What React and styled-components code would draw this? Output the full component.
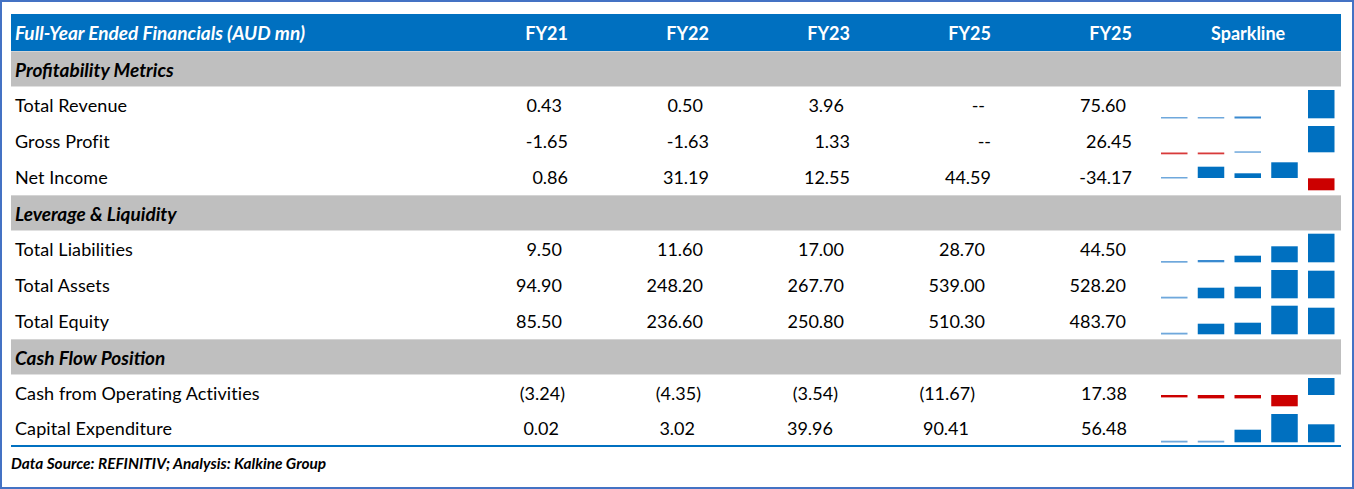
import React from "react"
import styled, { createGlobalStyle } from "styled-components"

// -- GLOBAL --
const GlobalStyle = createGlobalStyle`
    html, body {
        margin: 0;
        padding: 0;
        background: #ffffff;
    }
    body {
        font-family: Lato, "Open Sans", sans-serif;
        color: #000000;
    }
`

// -- DATA --
const YEARS = ["FY21", "FY22", "FY23", "FY25", "FY25"]

const LIGHT = "#6fa8dc"
const MID = "#3a8ad0"
const BLUE = "#0070c0"
const RED = "#cc0000"
const LIGHTRED = "#d83a3a"

// bars: [top, height, colour] relative to the 36px row
const SECTIONS = [
    {
        title: "Profitability Metrics",
        rows: [
            {
                label: "Total Revenue", pad: 6,
                values: ["0.43", "0.50", "3.96", "--", "75.60"],
                bars: [[30, 1.5, LIGHT], [30, 1.5, LIGHT], [29.5, 2, MID], null, [3, 28.3, BLUE]],
            },
            {
                label: "Gross Profit", pad: 0,
                values: ["-1.65", "-1.63", "1.33", "--", "26.45"],
                bars: [[29.5, 1.8, LIGHTRED], [29.5, 1.8, LIGHTRED], [28.3, 1.5, LIGHT], null, [3, 26.3, BLUE]],
            },
            {
                label: "Net Income", pad: 0,
                values: ["0.86", "31.19", "12.55", "44.59", "-34.17"],
                bars: [[18, 1.5, LIGHT], [7.7, 11.3, BLUE], [14.3, 4.7, BLUE], [3.3, 15.7, BLUE], [19.3, 12, RED]],
            },
        ],
    },
    {
        title: "Leverage & Liquidity",
        rows: [
            {
                label: "Total Liabilities", pad: 6,
                values: ["9.50", "11.60", "17.00", "28.70", "44.50"],
                bars: [[30, 1.7, LIGHT], [29, 2.3, MID], [24.7, 6.6, BLUE], [15.3, 16, BLUE], [2.7, 28.6, BLUE]],
            },
            {
                label: "Total Assets", pad: 6,
                values: ["94.90", "248.20", "267.70", "539.00", "528.20"],
                bars: [[29.7, 1.8, LIGHT], [20.7, 10.6, BLUE], [19.7, 11.6, BLUE], [3, 28.3, BLUE], [3.7, 27.6, BLUE]],
            },
            {
                label: "Total Equity", pad: 6,
                values: ["85.50", "236.60", "250.80", "510.30", "483.70"],
                bars: [[29.7, 1.8, LIGHT], [20.7, 10.6, BLUE], [19.7, 11.6, BLUE], [2.7, 28.6, BLUE], [4.7, 26.6, BLUE]],
            },
        ],
    },
    {
        title: "Cash Flow Position",
        rows: [
            {
                label: "Cash from Operating Activities", pads: [3, 8, 12, 16, 5],
                values: ["(3.24)", "(4.35)", "(3.54)", "(11.67)", "17.38"],
                bars: [[20, 2.4, RED], [20, 3.4, RED], [20, 3.4, RED], [20, 11.3, RED], [3, 17, BLUE]],
            },
            {
                label: "Capital Expenditure", pads: [9, 14, 17, 22, 5], last: true,
                values: ["0.02", "3.02", "39.96", "90.41", "56.48"],
                bars: [[29.7, 1.8, LIGHT], [29.7, 1.8, LIGHT], [18.7, 12.6, BLUE], [3, 28.3, BLUE], [13.3, 18, BLUE]],
            },
        ],
    },
]

// -- STYLED COMPONENTS --
const Frame = styled.div`
    box-sizing: border-box;
    width: 1354px;
    height: 489px;
    border: 2px solid #4472c4;
    padding: 12px 11px 0 9px;
`

const Grid = styled.div`
    display: grid;
    grid-template-columns: 416px repeat(5, 141px) 1fr;
`

const HeaderCell = styled.div`
    height: 37px;
    background: #0070c0;
    color: #ffffff;
    font-weight: 700;
    font-size: ${p => (p.$italic ? 19 : 18)}px;
    font-style: ${p => (p.$italic ? "italic" : "normal")};
    display: flex;
    align-items: center;
    justify-content: ${p => p.$justify || "flex-end"};
    padding: ${p => p.$padding || "0"};
    box-sizing: border-box;
    white-space: nowrap;
`

const SectionBand = styled.div`
    grid-column: 1 / -1;
    height: 36px;
    box-sizing: border-box;
    background: #bfbfbf;
    border-top: 1px solid #d4d4d4;
    border-bottom: 1px solid #e0e0e0;
    display: flex;
    align-items: center;
    padding-left: 4px;
    font-size: 19px;
    font-weight: 700;
    font-style: italic;
`

const Cell = styled.div`
    height: 36px;
    box-sizing: border-box;
    display: flex;
    align-items: center;
    font-size: 18px;
    white-space: nowrap;
    border-bottom: ${p => (p.$last ? "2px solid #0070c0" : "none")};
`

const LabelCell = styled(Cell)`
    padding-left: 4px;
    letter-spacing: 0.1px;
`

const ValueCell = styled(Cell)`
    justify-content: flex-end;
    padding-right: ${p => p.$pad}px;
`

const SparkCell = styled(Cell)`
    padding-left: 29px;
    align-items: stretch;
`

const Footer = styled.div`
    padding: 7px 0 0 0;
    font-size: 15.4px;
    font-weight: 700;
    font-style: italic;
`

// -- PARTS --
const Sparkline = ({ bars }) => (
    <svg width="180" height="36" viewBox="0 0 180 36">
        {bars.map((b, i) =>
            b ? <rect key={i} x={i * 36.75} y={b[0]} width="26.5" height={b[1]} fill={b[2]} /> : null
        )}
    </svg>
)

const DataRow = ({ row }) => (
    <>
        <LabelCell $last={row.last}>{row.label}</LabelCell>
        {row.values.map((v, i) => (
            <ValueCell key={i} $last={row.last} $pad={row.pads ? row.pads[i] : row.pad}>
                {v}
            </ValueCell>
        ))}
        <SparkCell $last={row.last}>
            <Sparkline bars={row.bars} />
        </SparkCell>
    </>
)

export default function App() {
    return (
        <>
            <GlobalStyle />
            <Frame>
                <Grid>
                    <HeaderCell $italic $justify="flex-start" $padding="0 0 0 4px">
                        Full-Year Ended Financials (AUD mn)
                    </HeaderCell>
                    {YEARS.map((y, i) => (
                        <HeaderCell key={i}>{y}</HeaderCell>
                    ))}
                    <HeaderCell $justify="flex-start" $padding="0 0 0 79px">Sparkline</HeaderCell>

                    {SECTIONS.map(s => (
                        <React.Fragment key={s.title}>
                            <SectionBand>{s.title}</SectionBand>
                            {s.rows.map(r => (
                                <DataRow key={r.label} row={r} />
                            ))}
                        </React.Fragment>
                    ))}
                </Grid>
                <Footer>Data Source: REFINITIV; Analysis: Kalkine Group</Footer>
            </Frame>
        </>
    )
}
